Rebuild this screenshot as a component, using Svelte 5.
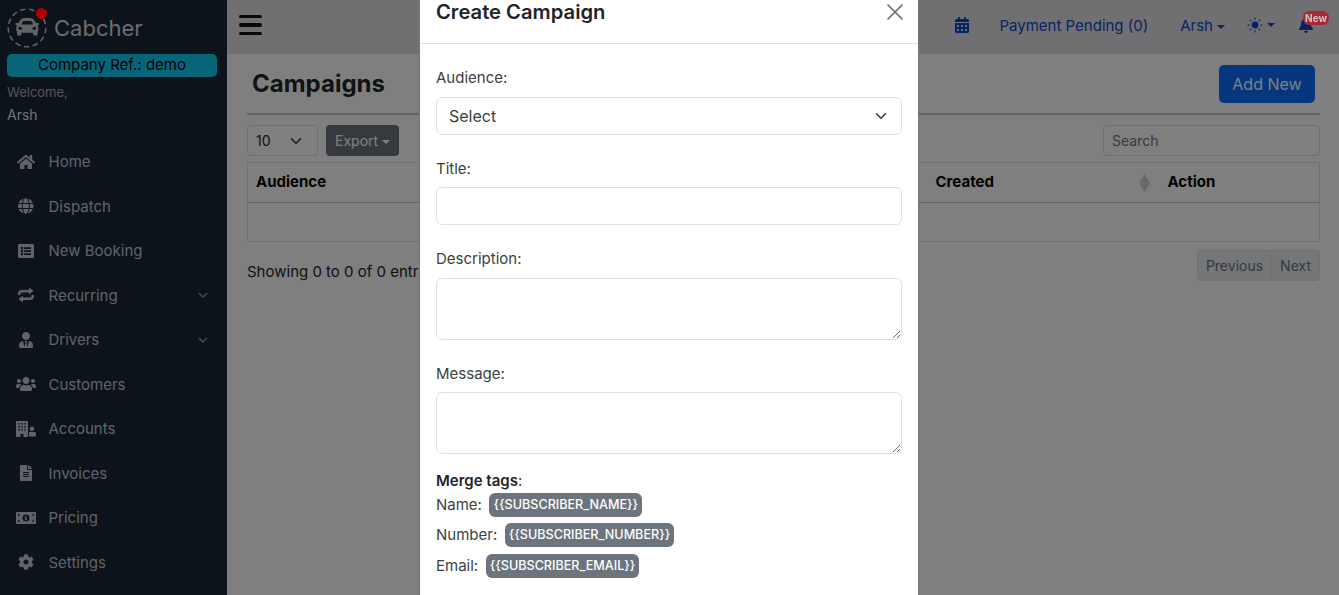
<script>
	const nav = [
		{ label: 'Home', box: '0 0 576 512', d: 'M280.37 148.26L96 300.11V464a16 16 0 0 0 16 16l112.06-.29a16 16 0 0 0 15.92-16V368a16 16 0 0 1 16-16h64a16 16 0 0 1 16 16v95.64a16 16 0 0 0 16 16.05L464 480a16 16 0 0 0 16-16V300L295.67 148.26a12.19 12.19 0 0 0-15.3 0zM571.6 251.47L488 182.56V44.05a12 12 0 0 0-12-12h-56a12 12 0 0 0-12 12v72.61L318.47 43a48 48 0 0 0-61 0L4.34 251.47a12 12 0 0 0-1.6 16.9l25.5 31A12 12 0 0 0 45.15 301l235.22-193.74a12.19 12.19 0 0 1 15.3 0L530.9 301a12 12 0 0 0 16.9-1.6l25.5-31a12 12 0 0 0-1.7-16.93z' },
		{ label: 'Dispatch', box: '0 0 496 512', d: 'M336.5 160C322 70.7 287.8 8 248 8s-74 62.7-88.5 152h177zM152 256c0 22.2 1.2 43.5 3.3 64h185.3c2.1-20.5 3.3-41.8 3.3-64s-1.2-43.5-3.3-64H155.3c-2.1 20.5-3.3 41.8-3.3 64zm324.7-96c-28.6-67.9-86.5-120.4-158-141.6 24.4 33.8 41.2 84.7 50 141.6h108zM177.2 18.4C105.8 39.6 47.8 92.1 19.3 160h108c8.7-56.9 25.5-107.8 49.9-141.6zM487.4 192H372.7c2.1 21 3.3 42.5 3.3 64s-1.2 43-3.3 64h114.6c5.5-20.5 8.6-41.8 8.6-64s-3.1-43.5-8.5-64zM120 256c0-21.5 1.2-43 3.3-64H8.6C3.2 212.5 0 233.8 0 256s3.2 43.5 8.6 64h114.6c-2-21-3.2-42.5-3.2-64zm39.5 96c14.5 89.3 48.7 152 88.5 152s74-62.7 88.5-152h-177zm159.3 141.6c71.4-21.2 129.4-73.7 158-141.6h-108c-8.8 56.9-25.6 107.8-50 141.6zM19.3 352c28.6 67.9 86.5 120.4 158 141.6-24.4-33.8-41.2-84.7-50-141.6h-108z' },
		{ label: 'New Booking', box: '0 0 512 512', d: 'M464 480H48c-26.51 0-48-21.49-48-48V80c0-26.51 21.49-48 48-48h416c26.51 0 48 21.49 48 48v352c0 26.51-21.49 48-48 48zM128 120c-22.091 0-40 17.909-40 40s17.909 40 40 40 40-17.909 40-40-17.909-40-40-40zm0 96c-22.091 0-40 17.909-40 40s17.909 40 40 40 40-17.909 40-40-17.909-40-40-40zm0 96c-22.091 0-40 17.909-40 40s17.909 40 40 40 40-17.909 40-40-17.909-40-40-40zm288-136v-32c0-6.627-5.373-12-12-12H204c-6.627 0-12 5.373-12 12v32c0 6.627 5.373 12 12 12h200c6.627 0 12-5.373 12-12zm0 96v-32c0-6.627-5.373-12-12-12H204c-6.627 0-12 5.373-12 12v32c0 6.627 5.373 12 12 12h200c6.627 0 12-5.373 12-12zm0 96v-32c0-6.627-5.373-12-12-12H204c-6.627 0-12 5.373-12 12v32c0 6.627 5.373 12 12 12h200c6.627 0 12-5.373 12-12z' },
		{ label: 'Recurring', box: '0 0 18 16', arrow: true, d: 'M1 8V7a4 4 0 0 1 4-4h7V.5L16.500 4 12 7.500V5.500H5A1.500 1.500 0 0 0 3.500 7v1zM17 8v1a4 4 0 0 1-4 4H6v2.500L1.500 12 6 8.500v2h7A1.500 1.500 0 0 0 14.500 9V8z' },
		{ label: 'Drivers', box: '0 0 448 512', arrow: true, d: 'M224 256c70.7 0 128-57.3 128-128S294.7 0 224 0 96 57.3 96 128s57.3 128 128 128zm95.8 32.6L272 480l-32-136 32-56h-96l32 56-32 136-47.8-191.4C56.9 292 0 350.3 0 422.4V464c0 26.5 21.5 48 48 48h352c26.5 0 48-21.5 48-48v-41.6c0-72.1-56.9-130.4-128.2-133.8z' },
		{ label: 'Customers', box: '0 0 640 512', d: 'M96 224c35.3 0 64-28.7 64-64s-28.7-64-64-64-64 28.7-64 64 28.7 64 64 64zm448 0c35.3 0 64-28.7 64-64s-28.7-64-64-64-64 28.7-64 64 28.7 64 64 64zm32 32h-64c-17.6 0-33.5 7.1-45.1 18.6 40.3 22.1 68.9 62 75.1 109.4h66c17.7 0 32-14.3 32-32v-32c0-35.3-28.7-64-64-64zm-256 0c61.9 0 112-50.1 112-112S381.9 32 320 32 208 82.1 208 144s50.1 112 112 112zm76.8 32h-8.3c-20.8 10-43.9 16-68.5 16s-47.6-6-68.5-16h-8.3C179.6 288 128 339.6 128 403.2V432c0 26.5 21.5 48 48 48h288c26.5 0 48-21.5 48-48v-28.8c0-63.6-51.6-115.2-115.2-115.2zm-223.7-13.4C161.5 263.1 145.6 256 128 256H64c-35.3 0-64 28.7-64 64v32c0 17.7 14.3 32 32 32h65.9c6.3-47.4 34.9-87.3 75.2-109.4z' },
		{ label: 'Accounts', box: '0 0 640 512', d: 'M24 0h336c13 0 24 11 24 24v464c0 13-11 24-24 24H240v-96h-96v96H24c-13 0-24-11-24-24V24C0 11 11 0 24 0zm48 64v48h48V64H72zm96 0v48h48V64h-48zm96 0v48h48V64h-48zM72 160v48h48v-48H72zm96 0v48h48v-48h-48zm96 0v48h48v-48h-48zM72 256v48h48v-48H72zm96 0v48h48v-48h-48zm96 0v48h48v-48h-48zM512 320a72 72 0 1 0 0-144 72 72 0 0 0 0 144zm-80 32h160c26 0 48 22 48 48v64c0 18-14 32-32 32H416V368c0-8 8-16 16-16z' },
		{ label: 'Invoices', box: '0 0 384 512', d: 'M224 136V0H24C10.7 0 0 10.7 0 24v464c0 13.3 10.7 24 24 24h336c13.3 0 24-10.7 24-24V160H248c-13.2 0-24-10.8-24-24zm64 236c0 6.6-5.4 12-12 12H108c-6.6 0-12-5.4-12-12v-8c0-6.6 5.4-12 12-12h168c6.6 0 12 5.4 12 12v8zm0-64c0 6.6-5.4 12-12 12H108c-6.6 0-12-5.4-12-12v-8c0-6.6 5.4-12 12-12h168c6.6 0 12 5.4 12 12v8zm0-72v8c0 6.6-5.4 12-12 12H108c-6.6 0-12-5.4-12-12v-8c0-6.6 5.4-12 12-12h168c6.6 0 12 5.4 12 12zm96-114.1v6.1H256V0h6.1c6.4 0 12.5 2.5 17 7l97.9 98c4.5 4.5 7 10.6 7 16.9z' },
		{ label: 'Pricing', box: '0 0 640 512', d: 'M32 64h576c18 0 32 14 32 32v320c0 18-14 32-32 32H32c-18 0-32-14-32-32V96c0-18 14-32 32-32zm288 80a112 112 0 1 0 0 224 112 112 0 0 0 0-224zm-16 64h36v88h20v32h-76v-32h20v-52h-12l-12 8-16-26 40-18zM64 136v64h32v-32h32v-32H64zm512 0h-64v32h32v32h32v-64zM64 376h64v-32H96v-32H64v64zm512 0v-64h-32v32h-32v32h64z' },
		{ label: 'Settings', box: '0 0 512 512', d: 'M487.4 315.7l-42.6-24.6c4.3-23.2 4.3-47 0-70.2l42.6-24.6c4.9-2.8 7.1-8.6 5.5-14-11.1-35.6-30-67.8-54.7-94.6-3.8-4.1-10-5.1-14.8-2.3L380.8 110c-17.9-15.4-38.5-27.3-60.8-35.1V25.8c0-5.6-3.9-10.5-9.4-11.7-36.7-8.2-74.3-7.8-109.2 0-5.5 1.2-9.4 6.1-9.4 11.7V75c-22.2 7.9-42.8 19.8-60.8 35.1L88.7 85.5c-4.9-2.8-11-1.9-14.8 2.3-24.7 26.7-43.6 58.9-54.7 94.6-1.7 5.4.6 11.2 5.5 14L67.3 221c-4.3 23.2-4.3 47 0 70.2l-42.6 24.6c-4.9 2.8-7.1 8.6-5.5 14 11.1 35.6 30 67.8 54.7 94.6 3.8 4.1 10 5.1 14.8 2.3l42.6-24.6c17.9 15.4 38.5 27.3 60.8 35.1v49.2c0 5.6 3.9 10.5 9.4 11.7 36.7 8.2 74.3 7.8 109.2 0 5.5-1.2 9.4-6.1 9.4-11.7v-49.2c22.2-7.9 42.8-19.8 60.8-35.1l42.6 24.6c4.9 2.8 11 1.9 14.8-2.3 24.7-26.7 43.6-58.9 54.7-94.6 1.5-5.5-.7-11.3-5.6-14.1zM256 336c-44.1 0-80-35.9-80-80s35.9-80 80-80 80 35.9 80 80-35.9 80-80 80z' }
	];

	const tags = [
		{ label: 'Name:', tag: '{{SUBSCRIBER_NAME}}' },
		{ label: 'Number:', tag: '{{SUBSCRIBER_NUMBER}}' },
		{ label: 'Email:', tag: '{{SUBSCRIBER_EMAIL}}' }
	];
</script>

<div class="shell">
	<aside class="sidebar">
		<div class="brand">
			<svg class="logo" viewBox="0 0 44 44" width="44" height="44">
				<circle cx="20" cy="21" r="18.800" fill="none" stroke="#c4c7cb" stroke-width="1.600" stroke-dasharray="5.500 3.500" />
				<g transform="translate(8.500 8) scale(0.046)">
					<path fill="#c4c7cb" d="M499.99 176h-59.87l-16.64-41.6C406.38 91.63 365.57 64 319.5 64h-127c-46.06 0-86.88 27.63-103.99 70.4L71.87 176H12.01C4.2 176-1.53 183.34.37 190.91l6 24C7.7 220.25 12.5 224 18.01 224h20.07C24.65 235.73 16 252.78 16 272v48c0 16.12 6.16 30.67 16 41.93V416c0 17.67 14.33 32 32 32h32c17.67 0 32-14.33 32-32v-32h256v32c0 17.67 14.33 32 32 32h32c17.67 0 32-14.33 32-32v-54.07c9.84-11.25 16-25.8 16-41.93v-48c0-19.22-8.65-36.27-22.07-48H494c5.51 0 10.31-3.75 11.64-9.09l6-24c1.89-7.57-3.84-14.91-11.65-14.91zm-352.06-17.83c7.29-18.22 24.94-30.17 44.57-30.17h127c19.63 0 37.28 11.95 44.57 30.17L384 208H128l19.93-49.83zM96 319.8c-19.2 0-32-12.76-32-31.9S76.8 256 96 256s48 28.71 48 47.85-28.8 15.95-48 15.95zm320 0c-19.2 0-48 3.19-48-15.95S396.8 256 416 256s32 12.76 32 31.9-12.8 31.9-32 31.9z" />
				</g>
			</svg>
			<span class="brand-name">Cabcher</span>
			<i class="logo-dot"></i>
		</div>
		<div class="company">Company Ref.: demo</div>
		<div class="welcome">Welcome,</div>
		<div class="username">Arsh</div>
		<nav class="menu">
			{#each nav as item}
				<div class="menu-item">
					<span class="menu-icon">
						<svg viewBox={item.box} height="16" fill="currentColor"><path d={item.d} /></svg>
					</span>
					<span class="menu-label">{item.label}</span>
					{#if item.arrow}
						<svg class="chev" viewBox="0 0 12 12" width="12" height="12"><path d="M2 4l4 4 4-4" fill="none" stroke="currentColor" stroke-width="1.400" /></svg>
					{/if}
				</div>
			{/each}
		</nav>
	</aside>

	<div class="main">
		<header class="topbar">
			<div class="burger"><i></i><i></i><i></i></div>
			<div class="top-links">
				<svg class="top-cal" viewBox="0 0 448 512" width="14" height="16" fill="currentColor"><path d="M0 464c0 26.5 21.5 48 48 48h352c26.5 0 48-21.5 48-48V192H0v272zm320-196c0-6.6 5.4-12 12-12h40c6.6 0 12 5.4 12 12v40c0 6.6-5.4 12-12 12h-40c-6.6 0-12-5.4-12-12v-40zm0 128c0-6.6 5.4-12 12-12h40c6.6 0 12 5.4 12 12v40c0 6.6-5.4 12-12 12h-40c-6.6 0-12-5.4-12-12v-40zM192 268c0-6.6 5.4-12 12-12h40c6.6 0 12 5.4 12 12v40c0 6.6-5.4 12-12 12h-40c-6.6 0-12-5.4-12-12v-40zm0 128c0-6.6 5.4-12 12-12h40c6.6 0 12 5.4 12 12v40c0 6.6-5.4 12-12 12h-40c-6.6 0-12-5.4-12-12v-40zM64 268c0-6.6 5.4-12 12-12h40c6.6 0 12 5.4 12 12v40c0 6.6-5.4 12-12 12H76c-6.6 0-12-5.4-12-12v-40zm0 128c0-6.6 5.4-12 12-12h40c6.6 0 12 5.4 12 12v40c0 6.6-5.4 12-12 12H76c-6.6 0-12-5.4-12-12v-40zM400 64h-48V16c0-8.8-7.2-16-16-16h-32c-8.8 0-16 7.2-16 16v48H160V16c0-8.8-7.2-16-16-16h-32c-8.8 0-16 7.2-16 16v48H48C21.5 64 0 85.5 0 112v48h448v-48c0-26.5-21.5-48-48-48z" /></svg>
				<span class="top-pay">Payment Pending (0)</span>
				<span class="top-user">Arsh<b class="caret"></b></span>
				<span class="top-theme">
					<svg viewBox="0 0 16 16" width="16" height="16" fill="currentColor" stroke="currentColor"><circle cx="8" cy="8" r="3.400" stroke="none" /><path stroke-width="1.100" fill="none" d="M8 .5v2.200M8 13.300v2.200M.5 8h2.200M13.300 8h2.200M2.700 2.700l1.500 1.500M11.800 11.800l1.500 1.500M2.700 13.300l1.500-1.500M11.800 4.200l1.500-1.500" /></svg>
					<b class="caret"></b>
				</span>
				<span class="top-bell">
					<svg viewBox="0 0 448 512" width="14" height="16" fill="currentColor"><path d="M224 512c35.32 0 63.97-28.65 63.97-64H160.03c0 35.35 28.65 64 63.97 64zm215.39-149.71c-19.32-20.76-55.47-51.99-55.47-154.29 0-77.7-54.48-139.9-127.94-155.16V32c0-17.67-14.32-32-31.98-32s-31.98 14.33-31.98 32v20.84C118.56 68.1 64.08 130.3 64.08 208c0 102.3-36.15 133.53-55.47 154.29-6 6.45-8.66 14.16-8.61 21.71.11 16.4 12.98 32 32.1 32h383.8c19.12 0 32-15.6 32.1-32 .05-7.55-2.61-15.27-8.61-21.71z" /></svg>
					<em class="new-badge">New</em>
				</span>
			</div>
		</header>

		<section class="content">
			<div class="title-row">
				<h1>Campaigns</h1>
				<button class="add-new" type="button">Add New</button>
			</div>
			<div class="tools">
				<div class="left-tools">
					<div class="len">10</div>
					<div class="export">Export<b class="caret"></b></div>
				</div>
				<div class="search">Search</div>
			</div>
			<table>
				<colgroup><col /><col class="col-created" /><col class="col-action" /></colgroup>
				<thead>
					<tr>
						<th>Audience</th>
						<th class="sort">Created<svg viewBox="0 0 11 18" width="11" height="18"><path d="M5.500 0L11 8.700H0zM5.500 18L0 9.300h11z" fill="#d0d0d0" /></svg></th>
						<th>Action</th>
					</tr>
				</thead>
				<tbody><tr><td colspan="3"></td></tr></tbody>
			</table>
			<div class="foot-row">
				<span class="showing">Showing 0 to 0 of 0 entries</span>
				<div class="pager"><span>Previous</span><span>Next</span></div>
			</div>
		</section>
	</div>
</div>

<div class="backdrop"></div>

<div class="modal">
	<div class="modal-head">
		<h5>Create Campaign</h5>
		<svg viewBox="0 0 16 16" width="16" height="16"><path d="M.5.500l15 15M15.500.500l-15 15" stroke="#777" stroke-width="1.700" fill="none" /></svg>
	</div>
	<form class="modal-body">
		<label for="f-aud">Audience:</label>
		<select id="f-aud"><option>Select</option></select>
		<label for="f-title">Title:</label>
		<input id="f-title" type="text" />
		<label for="f-desc">Description:</label>
		<textarea id="f-desc"></textarea>
		<label for="f-msg">Message:</label>
		<textarea id="f-msg"></textarea>
		<div class="merge">
			<div class="merge-head"><strong>Merge tags</strong>:</div>
			{#each tags as t}
				<div class="merge-row">{t.label}<span class="badge">{t.tag}</span></div>
			{/each}
		</div>
	</form>
</div>

<style>
	:global(body) {
		overflow: hidden;
		font-family: Inter, 'Noto Sans', sans-serif;
		font-size: 15px;
		color: #212529;
	}
	.shell {
		display: flex;
		height: 595px;
		overflow: hidden;
		background: #fff;
	}
	.sidebar {
		width: 227px;
		flex: none;
		background: #1a2636;
		color: #c2c7d0;
		padding: 3px 10px 0 7px;
		box-sizing: border-box;
	}
	.brand {
		display: flex;
		align-items: center;
		height: 51px;
	}
	.brand-name {
		font-size: 22px;
		margin-left: 3px;
		margin-bottom: 1px;
		color: #d6d8db;
	}
	.logo-dot {
		position: absolute;
		z-index: 2;
		left: 36px;
		top: 8px;
		width: 11px;
		height: 11px;
		border-radius: 50%;
		background: #b40000;
	}
	.company {
		height: 23px;
		line-height: 21px;
		border-radius: 5px;
		background: #0dcaf0;
		color: #000;
		text-align: center;
		font-size: 15px;
	}
	.welcome {
		margin-top: 5px;
		font-size: 13px;
		color: #aaa;
		line-height: 20px;
	}
	.username {
		margin-top: 3px;
		font-size: 14px;
		line-height: 20px;
		color: #e4e4e4;
	}
	.menu {
		margin-top: 14.500px;
		margin-left: -7px;
		margin-right: -10px;
	}
	.menu-item {
		display: flex;
		align-items: center;
		height: 44.500px;
		padding: 0 18px 0 15px;
		color: #c2c7d0;
	}
	.menu-icon {
		width: 22px;
		display: flex;
		justify-content: center;
		margin-right: 11.500px;
	}
	.menu-icon svg {
		display: block;
	}
	.menu-label {
		flex: 1;
	}
	.chev {
		color: #999;
	}
	.main {
		flex: 1;
		min-width: 0;
	}
	.topbar {
		display: flex;
		align-items: center;
		justify-content: space-between;
		height: 54px;
		background: #e0e1e4;
		padding: 0 26px 4px 12px;
		box-sizing: border-box;
	}
	.burger {
		display: flex;
		flex-direction: column;
		gap: 5px;
		width: 23px;
	}
	.burger i {
		display: block;
		height: 3.500px;
		border-radius: 2px;
		background: #111;
	}
	.top-links {
		display: flex;
		align-items: center;
		color: #0d47c8;
		font-size: 15px;
	}
	.top-pay {
		margin-left: 31px;
	}
	.top-user {
		margin-left: 32px;
	}
	.top-theme {
		margin-left: 22px;
		display: flex;
		align-items: center;
	}
	.top-bell {
		margin-left: 24px;
		position: relative;
		display: flex;
	}
	.new-badge {
		position: absolute;
		z-index: 2;
		left: 4px;
		top: -6px;
		width: 26px;
		height: 14px;
		text-align: center;
		background: #a8283a;
		color: #d0c4c6;
		font-style: normal;
		font-weight: 700;
		font-size: 10px;
		line-height: 14px;
		border-radius: 6px;
	}
	.caret {
		display: inline-block;
		margin-left: 4px;
		vertical-align: 2px;
		border-top: 4px solid currentColor;
		border-left: 4px solid transparent;
		border-right: 4px solid transparent;
	}
	.content {
		padding: 0 19px 0 20px;
	}
	.title-row {
		display: flex;
		align-items: center;
		justify-content: space-between;
		height: 59px;
		border-bottom: 2px solid #c8c8c8;
		box-sizing: content-box;
	}
	h1 {
		margin: 0;
		font-size: 24px;
		font-weight: 700;
		padding-left: 5px;
	}
	.add-new {
		height: 38px;
		width: 96px;
		margin-right: 5px;
		border: 0;
		border-radius: 5px;
		background: #0d6efd;
		color: #fff;
		font: 16px Inter, sans-serif;
	}
	.tools {
		display: flex;
		justify-content: space-between;
		margin-top: 10px;
		font-size: 14px;
	}
	.left-tools {
		display: flex;
		gap: 8px;
	}
	.len {
		width: 71px;
		height: 31px;
		box-sizing: border-box;
		border: 1px solid #ddd;
		border-radius: 4px;
		line-height: 29px;
		padding-left: 8px;
		background: url("data:image/svg+xml,%3csvg xmlns='http://www.w3.org/2000/svg' viewBox='0 0 16 16'%3e%3cpath fill='none' stroke='%23343a40' stroke-linecap='round' stroke-linejoin='round' stroke-width='2' d='M2 5l6 6 6-6'/%3e%3c/svg%3e") no-repeat right 15px center / 12px 12px;
	}
	.export {
		width: 73px;
		height: 31px;
		box-sizing: border-box;
		border-radius: 4px;
		line-height: 31px;
		padding-left: 9px;
		background: #6c757d;
		color: #fff;
	}
	.search {
		width: 217px;
		height: 31px;
		box-sizing: border-box;
		border: 1px solid #ddd;
		border-radius: 4px;
		line-height: 29px;
		padding-left: 8px;
		color: #6c757d;
	}
	table {
		width: 100%;
		margin-top: 6px;
		border-collapse: collapse;
		table-layout: fixed;
		font-size: 15px;
	}
	.col-created {
		width: 232px;
	}
	.col-action {
		width: 160px;
	}
	th {
		height: 40px;
		padding: 0 8px 2px;
		box-sizing: border-box;
		text-align: left;
		font-weight: 700;
		color: #000;
		border: 1px solid #dee2e6;
		border-bottom-color: #c6c6c6;
		border-left: 0;
		border-right: 0;
	}
	th:first-child {
		border-left: 1px solid #dee2e6;
	}
	th:last-child {
		border-right: 1px solid #dee2e6;
	}
	.sort {
		position: relative;
	}
	.sort svg {
		position: absolute;
		right: 10px;
		top: 11px;
	}
	td {
		height: 39px;
		padding: 0;
		box-sizing: border-box;
		border: 1px solid #dee2e6;
	}
	.foot-row {
		display: flex;
		justify-content: space-between;
		align-items: flex-start;
		margin-top: 8px;
		font-size: 15px;
	}
	.showing {
		margin-top: 12px;
		line-height: 20px;
	}
	.pager {
		display: flex;
		height: 31px;
		border-radius: 4px;
		border: 1px solid #dee2e6;
		background: #e9ecef;
		color: #6c757d;
		font-size: 14px;
		line-height: 29px;
		box-sizing: border-box;
	}
	.pager span {
		padding: 0 8px;
	}
	.pager span + span {
		border-left: 1px solid #dee2e6;
	}
	.backdrop {
		position: fixed;
		inset: 0;
		background: rgba(0, 0, 0, 0.5);
	}
	.modal {
		position: fixed;
		left: 419px;
		top: -12px;
		width: 500px;
		height: 640px;
		background: #fff;
		border-left: 1px solid #777;
		border-right: 1px solid #777;
		box-sizing: border-box;
	}
	.modal-head {
		display: flex;
		align-items: center;
		justify-content: space-between;
		height: 56px;
		padding: 0 15px 8px 16px;
		box-sizing: border-box;
		border-bottom: 1px solid #dee2e6;
	}
	h5 {
		margin: 0;
		font-size: 20.200px;
		font-weight: 600;
		line-height: 24px;
	}
	.modal-body {
		display: flex;
		flex-direction: column;
		padding: 0 16px;
		color: #3a3f44;
	}
	label {
		font-size: 15px;
		line-height: 22px;
		margin: 23px 0 7.500px;
	}
	select,
	input,
	textarea {
		box-sizing: border-box;
		width: 100%;
		margin: 0;
		border: 1px solid #dee2e6;
		border-radius: 6px;
		background-color: #fff;
		font: 16px Inter, sans-serif;
		color: #3a3f44;
	}
	select {
		height: 38px;
		padding: 0 12px;
		appearance: none;
		background: #fff url("data:image/svg+xml,%3csvg xmlns='http://www.w3.org/2000/svg' viewBox='0 0 16 16'%3e%3cpath fill='none' stroke='%23343a40' stroke-linecap='round' stroke-linejoin='round' stroke-width='2' d='M2 5l6 6 6-6'/%3e%3c/svg%3e") no-repeat right 14px center / 12px 12px;
	}
	input {
		height: 38px;
	}
	textarea {
		height: 62px;
		display: block;
	}
	.merge {
		margin-top: 17px;
		font-size: 15px;
		line-height: 20px;
	}
	.merge-head {
		height: 19px;
	}
	strong {
		font-weight: 600;
		color: #212529;
	}
	.merge-row {
		height: 30.300px;
		display: flex;
		align-items: center;
	}
	.badge {
		margin-left: 7.500px;
		padding: 0 4px;
		height: 24px;
		line-height: 24px;
		border-radius: 6px;
		background: #6c757d;
		color: #fff;
		font-size: 12.600px;
		font-weight: 500;
	}
</style>
